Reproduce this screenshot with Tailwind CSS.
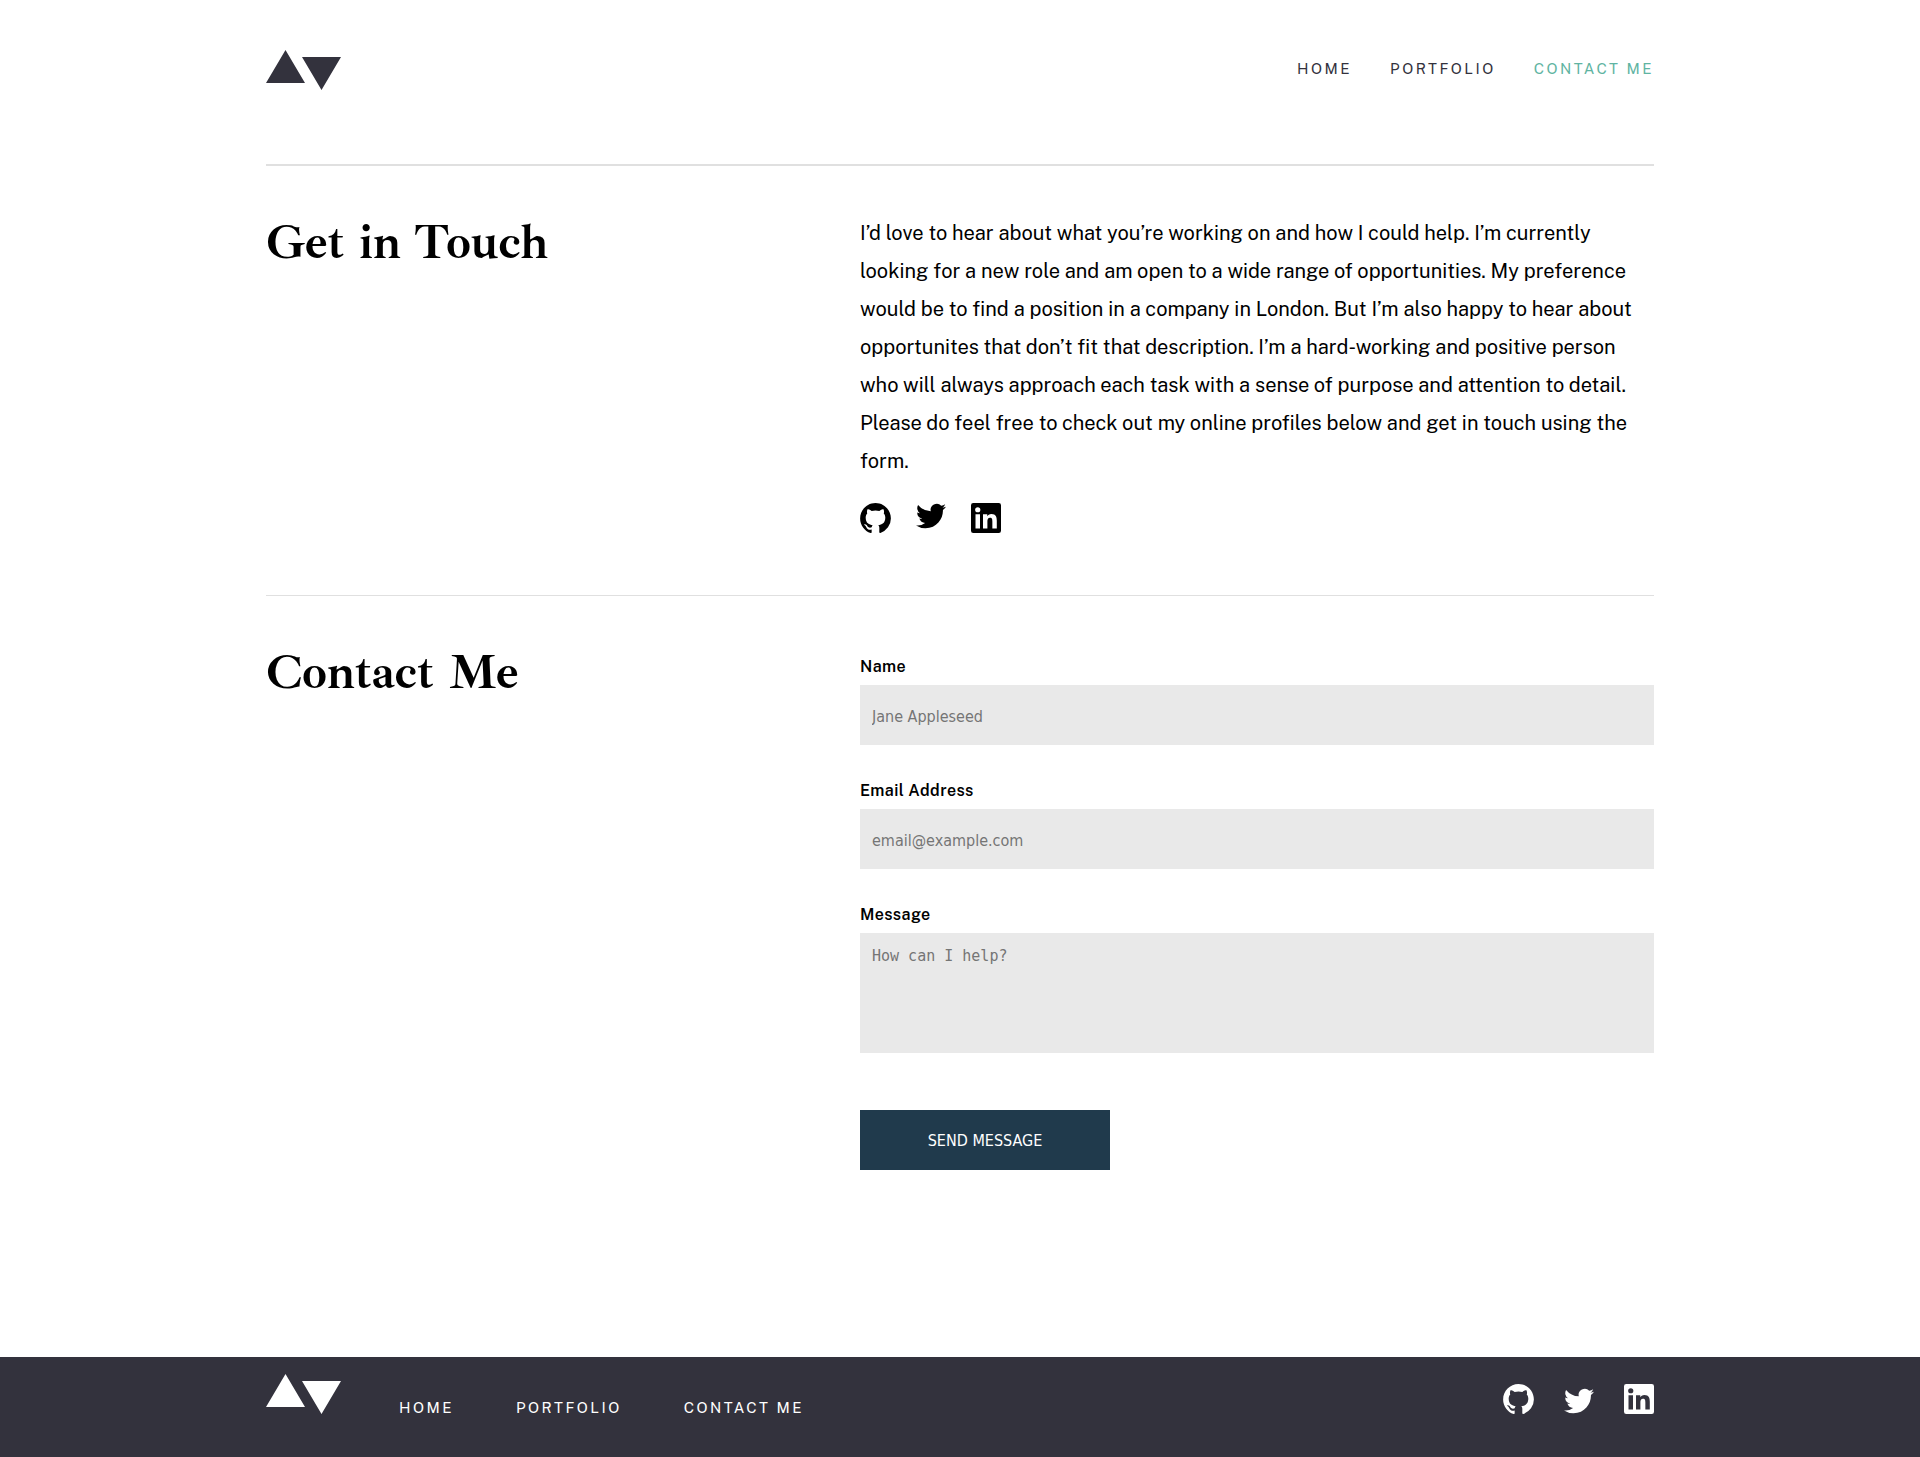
<!DOCTYPE html>
<html lang="en">
<head>
<meta charset="utf-8">
<meta name="viewport" content="width=device-width, initial-scale=1">
<title>Contact Me</title>
<script src="https://cdn.jsdelivr.net/npm/@tailwindcss/browser@4"></script>
</head>
<body class="flex min-h-screen flex-col bg-white font-['Public_Sans','Inter',sans-serif] text-black">

<svg class="hidden" aria-hidden="true">
  <symbol id="logo" viewBox="0 0 75 40"><path d="M19.500 0 39 33H0zM36 7h39L55.500 40z"/></symbol>
  <symbol id="github" viewBox="0 0 24.6 24"><path d="M12.300 0C5.510 0 0 5.510 0 12.300c0 5.440 3.520 10.040 8.410 11.670.61.110.84-.27.84-.59 0-.29-.01-1.060-.02-2.090-3.420.74-4.140-1.650-4.140-1.650-.56-1.420-1.370-1.800-1.370-1.800-1.120-.76.080-.75.080-.75 1.240.090 1.890 1.270 1.890 1.270 1.100 1.880 2.880 1.340 3.580 1.020.11-.79.430-1.340.78-1.640-2.730-.31-5.600-1.370-5.600-6.080 0-1.340.48-2.440 1.270-3.300-.13-.31-.55-1.560.12-3.250 0 0 1.030-.33 3.380 1.260a11.800 11.800 0 0 1 6.160 0c2.350-1.590 3.380-1.260 3.380-1.260.67 1.690.25 2.940.12 3.250.79.860 1.260 1.960 1.260 3.300 0 4.720-2.870 5.760-5.610 6.070.44.380.83 1.130.83 2.280 0 1.640-.01 2.970-.01 3.370 0 .33.220.71.850.59A12.300 12.300 0 0 0 24.600 12.300C24.600 5.510 19.090 0 12.300 0z"/></symbol>
  <symbol id="twitter" viewBox="0 0 24 20"><path d="M24 2.560a9.830 9.830 0 0 1-2.830.78A4.940 4.940 0 0 0 23.340.61a9.860 9.860 0 0 1-3.130 1.200A4.920 4.920 0 0 0 11.820 6.290 13.980 13.980 0 0 1 1.670 1.150a4.930 4.930 0 0 0 1.520 6.570 4.900 4.900 0 0 1-2.230-.61v.06a4.930 4.930 0 0 0 3.950 4.830 4.940 4.940 0 0 1-2.220.08 4.930 4.930 0 0 0 4.600 3.420A9.880 9.880 0 0 1 0 17.540a13.940 13.940 0 0 0 7.550 2.210c9.050 0 14-7.500 14-14 0-.21 0-.43-.01-.64A10 10 0 0 0 24 2.560z"/></symbol>
  <symbol id="linkedin" viewBox="0 0 24 24"><path fill-rule="evenodd" d="M1.800 0h20.400A1.800 1.800 0 0 1 24 1.800v20.400a1.800 1.800 0 0 1-1.800 1.800H1.800A1.800 1.800 0 0 1 0 22.200V1.800A1.800 1.800 0 0 1 1.800 0zM3.600 9h3.600v11.400H3.600zM5.400 3.300a2.080 2.080 0 1 0 0 4.160 2.080 2.080 0 0 0 0-4.160zM9.600 9H13v1.560c.48-.9 1.640-1.860 3.380-1.860 3.600 0 4.260 2.380 4.260 5.460v6.240h-3.560v-5.540c0-1.320-.02-3.020-1.840-3.020s-2.120 1.440-2.120 2.920v5.640H9.600z"/></symbol>
</svg>

<header class="w-full px-6">
  <div class="mx-auto flex max-w-[1388px] items-start justify-between border-b-2 border-[#e0e0e0] pt-[50px] pb-[74px]">
    <a href="#" aria-label="Home page"><svg class="h-10 w-[75px] fill-[#33323d]"><use href="#logo"/></svg></a>
    <nav class="flex gap-[38px] pt-[9px] text-[15px] leading-5 tracking-[0.165em] text-[#33323d] uppercase">
      <a href="#">Home</a>
      <a href="#">Portfolio</a>
      <a href="#" class="text-[#5fb4a2]" aria-current="page">Contact Me</a>
    </nav>
  </div>
</header>

<main class="w-full flex-1 px-6">
  <div class="mx-auto max-w-[1388px]">
    <section class="grid grid-cols-[594fr_794fr] border-b border-[#e0e0e0] pt-12 pb-[62px]">
      <h1 class="font-['Ibarra_Real_Nova','Liberation_Serif',serif] text-[49px] leading-[56px] font-bold">Get in Touch</h1>
      <div>
        <p class="text-xl leading-[38px]">I’d love to hear about what you’re working on and how I could help. I’m currently looking for a new role and am open to a wide range of opportunities. My preference would be to find a position in a company in London. But I’m also happy to hear about opportunites that don’t fit that description. I’m a hard-working and positive person who will always approach each task with a sense of purpose and attention to detail. Please do feel free to check out my online profiles below and get in touch using the form.</p>
        <div class="mt-[23px] flex items-start gap-[25px]">
          <a href="#" aria-label="GitHub"><svg class="h-[30px] w-[31px]"><use href="#github"/></svg></a>
          <a href="#" aria-label="Twitter"><svg class="h-[26px] w-[30px]"><use href="#twitter"/></svg></a>
          <a href="#" aria-label="LinkedIn"><svg class="size-[30px]"><use href="#linkedin"/></svg></a>
        </div>
      </div>
    </section>

    <section class="grid grid-cols-[594fr_794fr] pt-12 pb-12">
      <h2 class="font-['Ibarra_Real_Nova','Liberation_Serif',serif] text-[49px] leading-[56px] font-bold">Contact Me</h2>
      <form class="flex flex-col items-start pt-[11px] font-['Tahoma','DejaVu_Sans_Condensed',sans-serif]">
        <label for="name" class="mb-1.5 font-['Public_Sans','Inter',sans-serif] text-base leading-6 font-semibold tracking-wide">Name</label>
        <input id="name" type="text" placeholder="Jane Appleseed" class="mb-[34px] h-[60px] w-full bg-[#e9e9e9] px-3 pt-0.5 text-base placeholder:text-[#757575]">
        <label for="email" class="mb-1.5 font-['Public_Sans','Inter',sans-serif] text-base leading-6 font-semibold tracking-wide">Email Address</label>
        <input id="email" type="email" placeholder="email@example.com" class="mb-[34px] h-[60px] w-full bg-[#e9e9e9] px-3 pt-0.5 text-base placeholder:text-[#757575]">
        <label for="message" class="mb-1.5 font-['Public_Sans','Inter',sans-serif] text-base leading-6 font-semibold tracking-wide">Message</label>
        <textarea id="message" placeholder="How can I help?" class="mb-[57px] h-[120px] w-full resize-none bg-[#e9e9e9] px-3 py-3 font-['DejaVu_Sans_Mono',monospace] text-[15px] leading-[22px] placeholder:text-[#757575]"></textarea>
        <button type="submit" class="h-[60px] w-[250px] bg-[#203a4c] pt-0.5 text-base text-white uppercase">Send Message</button>
      </form>
    </section>
  </div>
</main>

<footer class="w-full bg-[#33323d] px-6">
  <div class="mx-auto flex h-[100px] max-w-[1388px] items-start text-white">
    <a href="#" aria-label="Home page" class="mt-[17px]"><svg class="h-10 w-[75px] fill-white"><use href="#logo"/></svg></a>
    <nav class="mt-[41px] ml-[58px] flex gap-[62px] text-[15px] leading-5 tracking-[0.165em] uppercase">
      <a href="#">Home</a>
      <a href="#">Portfolio</a>
      <a href="#">Contact Me</a>
    </nav>
    <div class="mt-[27px] ml-auto flex items-end gap-[30px] fill-white">
      <a href="#" aria-label="GitHub"><svg class="h-[30px] w-[31px]"><use href="#github"/></svg></a>
      <a href="#" aria-label="Twitter"><svg class="h-[26px] w-[30px]"><use href="#twitter"/></svg></a>
      <a href="#" aria-label="LinkedIn"><svg class="size-[30px]"><use href="#linkedin"/></svg></a>
    </div>
  </div>
</footer>
</body>
</html>
